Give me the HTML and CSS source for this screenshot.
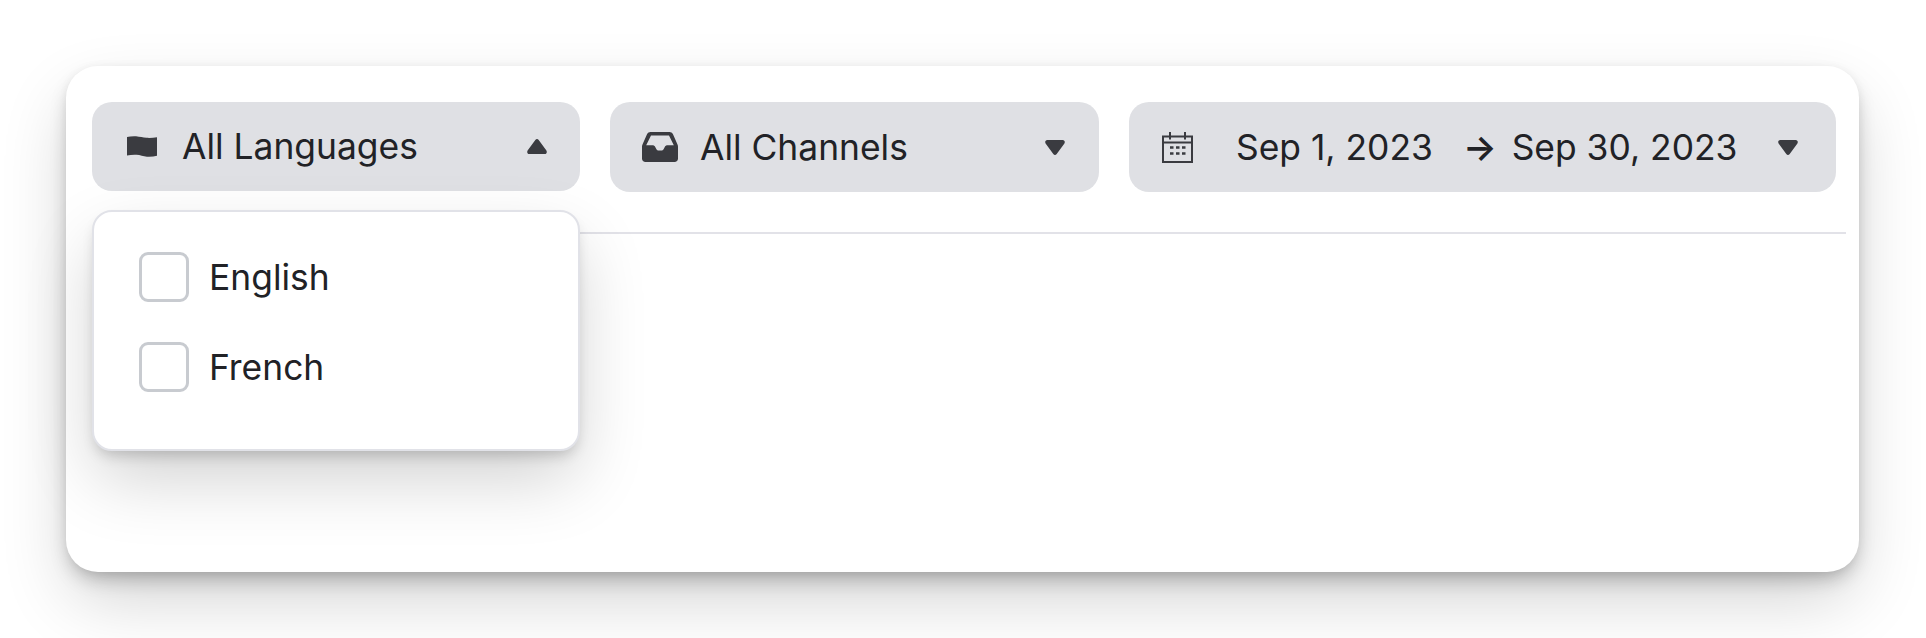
FILE: index.html
```html
<!DOCTYPE html>
<html>

<head>
    <link rel="stylesheet" href="styles.css">
</head>

<body>
    <main class="card">
        <div class="filters">
            <div class="filter filter-lang">
                <button class="select select-open">
                    <svg class="icon icon-flag" viewBox="0 0 30 21"><path d="M0 1C2.500.4 5.500 0 9 .2c4 .4 7 1.300 10.500 1.600 3.500.3 7-.1 10.500-.6V19.800c-3 .7-6.500 1.200-10 .9-3.800-.4-6.800-1.600-10.500-1.900C6 18.600 2.800 19 0 19.500Z"/></svg>
                    <span class="label">All Languages</span>
                    <svg class="caret" viewBox="0 0 20 15"><path d="M8.300 1 .6 11.600C-.3 13 .4 15 2.300 15h15.400c1.900 0 2.600-2 1.700-3.400L11.700 1C10.800-.3 9.200-.3 8.300 1Z"/></svg>
                </button>
                <!-- open menu -->
                <div class="menu">
                    <label class="option"><span class="box"></span>English</label>
                    <label class="option"><span class="box"></span>French</label>
                </div>
            </div>
            <div class="filter filter-channel">
                <button class="select">
                    <svg class="icon icon-inbox" viewBox="0 0 36 30"><path fill-rule="evenodd" d="M8.500 0h19c1.500 0 2.700.8 3.400 2.100l4.600 10.400c.3.700.5 1.400.5 2.200V26.500c0 2-1.500 3.500-3.500 3.500h-29C1.500 30 0 28.500 0 26.500V14.700c0-.8.2-1.500.5-2.200L5.100 2.100C5.800.8 7 0 8.500 0ZM9 3.500 4.200 13.300h6.300c1.200 0 2 .5 2.600 1.500l1.200 2.200c.6 1 1.400 1.500 2.600 1.500h2.200c1.200 0 2-.5 2.600-1.500l1.200-2.200c.6-1 1.400-1.500 2.600-1.500h6.300L27 3.500Z"/></svg>
                    <span class="label">All Channels</span>
                    <svg class="caret" viewBox="0 0 20 15"><path d="M8.300 14 .6 3.400C-.3 2 .4 0 2.300 0h15.400c1.900 0 2.600 2 1.700 3.400L11.700 14c-.9 1.300-2.500 1.300-3.400 0Z"/></svg>
                </button>
            </div>
            <div class="filter filter-date">
                <button class="select">
                    <svg class="icon icon-calendar" viewBox="0 0 31 31" fill="none" stroke-width="2"><path d="M1 4.500h29v25.500H1ZM1 10.500h29M8 0v7.500M23 0v7.500"/><path d="M8 15.500h3.500M14 15.500h3.500M20 15.500h3.500M8 21.500h3.500M14 21.500h3.500M20 21.500h3.500" stroke-width="2.400"/></svg>
                    <span class="date date-from">Sep 1, 2023</span>
                    <span class="arrow">→</span>
                    <span class="date">Sep 30, 2023</span>
                    <svg class="caret" viewBox="0 0 20 15"><path d="M8.300 14 .6 3.400C-.3 2 .4 0 2.300 0h15.400c1.900 0 2.600 2 1.700 3.400L11.700 14c-.9 1.300-2.500 1.300-3.400 0Z"/></svg>
                </button>
            </div>
        </div>
        <hr class="divider">
    </main>
</body>

</html>
```

FILE: styles.css
```css
* {
    margin: 0;
    padding: 0;
    box-sizing: border-box;
    font-family: "Inter", sans-serif;
}

body {
    width: 1926px;
    height: 638px;
    padding: 66px 67px 0 66px;
    background-color: #fff;
    overflow: hidden;
}

.card {
    height: 506px;
    padding: 36px 13px 0 26px;
    background-color: #fff;
    border-radius: 32px;
    box-shadow: 0 10px 20px -5px #00000048, 0 30px 70px -6px #00000030, 0 0 10px #0000000a;
}

.filters {
    display: flex;
    gap: 30px;
    padding-right: 10px;
}

.filter {
    position: relative;
}

.filter-lang {
    width: 488px;
}

.filter-channel {
    width: 489px;
}

.filter-date {
    flex: 1;
}

.select {
    width: 100%;
    height: 90px;
    display: flex;
    align-items: center;
    border: none;
    border-radius: 20px;
    background-color: #dfe0e4;
    color: #212226;
    font-size: 35.4px;
    text-align: left;
}

.select-open {
    height: 89px;
}

.icon {
    flex-shrink: 0;
    fill: #3a3b40;
    stroke: none;
}

.icon-flag {
    width: 30px;
    height: 21px;
    margin-left: 35px;
    margin-right: 25px;
}

.icon-inbox {
    width: 36px;
    height: 30px;
    margin-left: 32px;
    margin-right: 22px;
}

.icon-calendar {
    width: 31px;
    height: 31px;
    margin-left: 33px;
    margin-right: 43px;
    fill: none;
    stroke: #3a3b40;
}

.label {
    flex: 1;
}

.date {
    white-space: nowrap;
}

.arrow {
    margin: 0 15px 0 30px;
    font-weight: 600;
}

.caret {
    width: 20px;
    height: 15px;
    fill: #3a3b40;
    flex-shrink: 0;
}

.filter-lang .caret {
    margin-right: 33px;
}

.filter-channel .caret {
    margin-right: 34px;
}

.filter-date .caret {
    margin-left: 41px;
}

.menu {
    position: absolute;
    top: 108px;
    left: 0;
    width: 488px;
    height: 241px;
    padding: 20px 0 0 45px;
    background-color: #fff;
    border: 2px solid #e1e2e8;
    border-radius: 20px;
    box-shadow: 0 8px 14px -4px #00000030, 0 30px 70px -4px #00000030;
    z-index: 1;
}

.option {
    height: 90px;
    display: flex;
    align-items: center;
    gap: 20px;
    color: #212226;
    font-size: 35.4px;
}

.box {
    width: 50px;
    height: 50px;
    border: 3px solid #c8cbd0;
    border-radius: 9px;
    background-color: #fff;
}

.divider {
    height: 2px;
    margin-top: 40px;
    border: none;
    background-color: #e2e2e8;
}
```
